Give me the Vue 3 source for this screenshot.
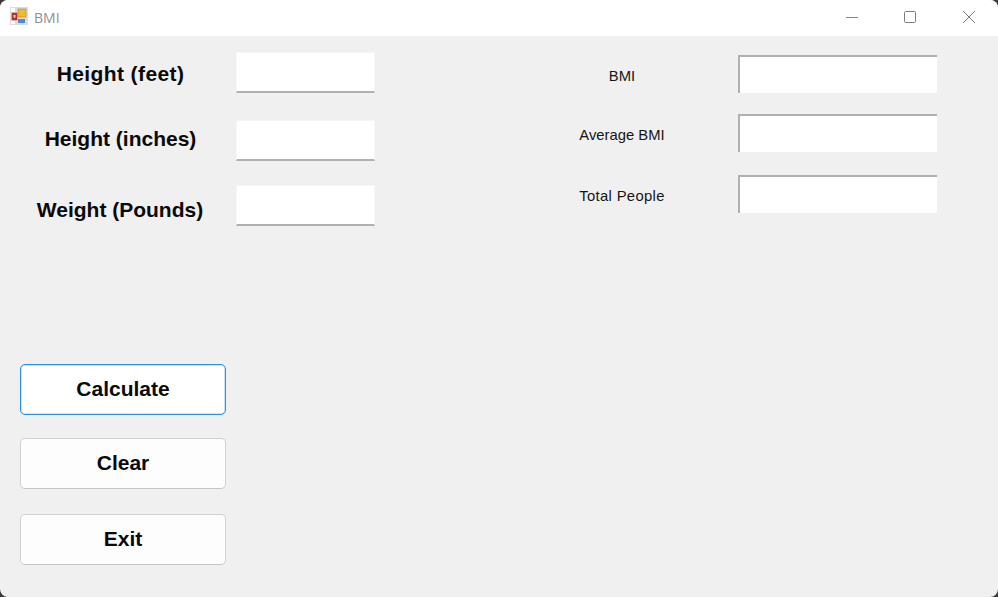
<script setup>
const leftRows = [
  { label: 'Height (feet)', cls: 'l1' },
  { label: 'Height (inches)', cls: 'l2' },
  { label: 'Weight (Pounds)', cls: 'l3' },
]
const rightRows = [
  { label: 'BMI', cls: 'r1' },
  { label: 'Average BMI', cls: 'r2' },
  { label: 'Total People', cls: 'r3' },
]
const buttons = [
  { label: 'Calculate', cls: 'focus' },
  { label: 'Clear', cls: 'b2' },
  { label: 'Exit', cls: 'b3' },
]
</script>

<template>
  <div class="window">
    <header class="titlebar">
      <svg class="appicon" width="18" height="18" viewBox="0 0 18 18">
        <rect x="0" y="0" width="18" height="18" fill="#dcdcdc" />
        <rect x="1" y="1" width="4" height="4" fill="#fff" />
        <rect x="1" y="13.5" width="4" height="3.5" fill="#fff" />
        <rect x="8" y="2" width="8" height="8" fill="#eebb30" stroke="#b8923a" stroke-width="0.7" />
        <rect x="2" y="6" width="5" height="7" fill="#c92a22" stroke="#9a3a34" stroke-width="0.6" />
        <rect x="3.5" y="8" width="2" height="2.6" fill="#f1d0cc" />
        <rect x="8" y="12" width="7" height="4" fill="#4f86d6" />
      </svg>
      <span class="title">BMI</span>
      <div class="controls">
        <svg class="ctl" width="14" height="14" viewBox="0 0 14 14"><path d="M1 7.5H13" stroke="#8a8a8a" stroke-width="1" fill="none" /></svg>
        <svg class="ctl" width="14" height="14" viewBox="0 0 14 14"><rect x="1.5" y="1.5" width="11" height="11" rx="1.2" stroke="#7c7c7c" stroke-width="1" fill="none" /></svg>
        <svg class="ctl last" width="14" height="14" viewBox="0 0 14 14"><path d="M1 1L13 13M13 1L1 13" stroke="#7c7c7c" stroke-width="1" fill="none" /></svg>
      </div>
    </header>
    <main class="content">
      <section class="left">
        <div class="fields">
          <div v-for="r in leftRows" :key="r.label" class="lrow" :class="r.cls">
            <span class="llabel">{{ r.label }}</span>
            <div class="linput"></div>
          </div>
        </div>
        <div class="buttons">
          <button v-for="b in buttons" :key="b.label" class="btn" :class="b.cls">{{ b.label }}</button>
        </div>
      </section>
      <section class="right">
        <div v-for="r in rightRows" :key="r.label" class="rrow" :class="r.cls">
          <span class="rlabel">{{ r.label }}</span>
          <div class="rinput"></div>
        </div>
      </section>
    </main>
  </div>
</template>

<style>
html, body { margin: 0; background: #3a3a3a; overflow: hidden; }
</style>

<style scoped>
.window {
  width: 998px;
  height: 597px;
  display: flex;
  flex-direction: column;
  background: #f0f0f0;
  border-radius: 8px;
  overflow: hidden;
  font-family: "Liberation Sans", Arial, sans-serif;
}
.titlebar {
  height: 36px;
  flex: none;
  background: #fff;
  display: flex;
  align-items: center;
  padding-left: 10px;
}
.appicon { margin-right: 6px; margin-top: -4px; }
.title {
  font-family: "Open Sans", sans-serif;
  font-size: 14px;
  color: #8d9095;
  margin-top: -2px;
}
.controls {
  margin-left: auto;
  display: flex;
  align-items: center;
  padding-right: 22px;
  gap: 44px;
}
.ctl { display: block; margin-top: -2px; }
.ctl.last { margin-left: 1px; }
.content {
  flex: 1;
  display: flex;
}
.left { width: 375px; padding-left: 20px; box-sizing: border-box; flex: none; }
.fields { padding-top: 16px; height: 328px; box-sizing: border-box; }
.lrow { display: flex; align-items: flex-start; }
.l2 { margin-top: 27px; }
.l3 { margin-top: 24px; }
.llabel {
  width: 202px;
  margin-left: -1px;
  margin-right: 15px;
  flex: none;
  text-align: center;
  font-size: 21px;
  font-weight: 700;
  color: #0a0a0a;
  line-height: 24px;
}
.l1 .llabel { padding-top: 10px; letter-spacing: 0.4px; padding-left: 1px; box-sizing: border-box; }
.l2 .llabel { padding-top: 7px; padding-left: 1px; box-sizing: border-box; }
.l3 .llabel { padding-top: 13px; }
.linput {
  width: 139px;
  height: 41px;
  box-sizing: border-box;
  background: #fff;
  border: 1px solid #f6f6f6;
  border-bottom: 2px solid #b0b0b0;
}
.buttons { display: flex; flex-direction: column; }
.btn {
  width: 206px;
  height: 51px;
  box-sizing: border-box;
  background: #fdfdfd;
  border: 1px solid #d0d0d0;
  border-bottom-color: #c4c4c4;
  border-radius: 5px;
  font-family: inherit;
  font-size: 21px;
  font-weight: 700;
  color: #0a0a0a;
  padding: 0 0 2px;
}
.focus {
  background: #fff;
  border-color: #2f8fe0;
  box-shadow: inset 0 0 0 1px rgba(47, 143, 224, 0.25);
}
.b2 { margin-top: 23px; }
.b3 { margin-top: 25px; }
.right { flex: 1; padding-top: 19px; }
.rrow { display: flex; align-items: center; }
.r2 { margin-top: 21px; }
.r3 { margin-top: 23px; }
.rlabel {
  width: 368px;
  flex: none;
  margin-right: -5px;
  padding-left: 126px;
  padding-top: 4px;
  box-sizing: border-box;
  text-align: center;
  font-size: 14.8px;
  color: #151515;
}
.r3 .rlabel { letter-spacing: 0.35px; }
.rinput {
  width: 199px;
  height: 38px;
  box-sizing: border-box;
  background: #fff;
  border-top: 2px solid #b0b0b0;
  border-left: 2px solid #b0b0b0;
}
</style>
